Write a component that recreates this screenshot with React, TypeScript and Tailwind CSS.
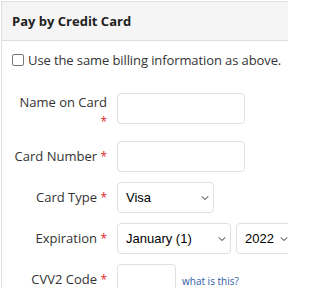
// Credit card payment panel: header, billing checkbox and a label/field form grid
import type { ReactNode } from "react";

const LABEL_FONT = "font-['Open_Sans','Liberation_Sans',sans-serif]";
const FIELD_FONT = "font-['Liberation_Sans',Arial,sans-serif]";

const Star = () => <span className="text-[12px] text-[#e02424]">*</span>;

// Small chevron drawn at the right edge of each select
const Chevron = () => (
  <svg
    viewBox="0 0 8 5"
    className="pointer-events-none absolute right-[5px] top-1/2 h-[5px] w-[8px] -translate-y-1/2"
    fill="none"
    stroke="#777"
    strokeWidth="1.1"
  >
    <path d="M0.7 0.8 L4 4 L7.3 0.8" />
  </svg>
);

const Row = ({ label, children }: { label: ReactNode; children: ReactNode }) => (
  <div className="flex">
    <div className="ml-px flex w-[94px] shrink-0 items-center justify-end text-right text-[13px] leading-[19px] text-[#333]">
      <span>{label}</span>
    </div>
    <div className="ml-[10px] flex items-start gap-[5px]">{children}</div>
  </div>
);

const Field = ({ width }: { width: string }) => (
  <input
    type="text"
    className={`h-[31px] ${width} rounded-[4px] border border-[#e1e1e1] bg-white`}
  />
);

const Select = ({ width, value, options }: { width: string; value: string; options: string[] }) => (
  <div className={`relative h-[31px] ${width} shrink-0`}>
    <select
      defaultValue={value}
      className={`h-full w-full appearance-none rounded-[4px] border border-[#e1e1e1] bg-white pl-[8px] text-[13px] text-black ${FIELD_FONT}`}
    >
      {options.map((o) => (
        <option key={o}>{o}</option>
      ))}
    </select>
    <Chevron />
  </div>
);

export default function App() {
  return (
    <div className={`h-[288px] w-[288px] overflow-hidden bg-white pl-px pt-px ${LABEL_FONT}`}>
      <div className="w-[320px] border border-[#dedede]">
        {/* Panel heading */}
        <div className="border-b border-[#dedede] bg-[#f5f5f5] px-[10px] py-[9px] text-[13px] font-bold leading-[20px] text-[#222]">
          Pay by Credit Card
        </div>

        <div className="px-[10px] pt-[9px] pb-6">
          <label className="flex items-center gap-[4px] text-[13px] leading-[20px] tracking-[-0.1px] text-[#333]">
            <input
              type="checkbox"
              className="h-[12px] w-[12px] appearance-none rounded-[2px] border border-[#777] bg-white"
            />
            Use the same billing information as above.
          </label>

          <div className="mt-[23px] flex flex-col gap-[10px]">
            <Row
              label={
                <>
                  Name on Card <Star />
                </>
              }
            >
              <Field width="w-[128px]" />
            </Row>
            <Row
              label={
                <>
                  Card Number <Star />
                </>
              }
            >
              <Field width="w-[128px]" />
            </Row>
            <Row
              label={
                <>
                  Card Type <Star />
                </>
              }
            >
              <Select width="w-[97px]" value="Visa" options={["Visa", "MasterCard", "American Express", "Discover"]} />
            </Row>
            <Row
              label={
                <>
                  Expiration <Star />
                </>
              }
            >
              <Select
                width="w-[114px]"
                value="January (1)"
                options={["January (1)", "February (2)", "March (3)", "April (4)"]}
              />
              <Select width="w-[57px]" value="2022" options={["2022", "2023", "2024", "2025"]} />
            </Row>
            <Row
              label={
                <>
                  CVV2 Code <Star />
                </>
              }
            >
              <Field width="w-[59px]" />
              <a href="#" className="self-center pl-[1px] pt-[3px] text-[10px] text-[#2d5ba3]">
                what is this?
              </a>
            </Row>
          </div>
        </div>
      </div>
    </div>
  );
}
